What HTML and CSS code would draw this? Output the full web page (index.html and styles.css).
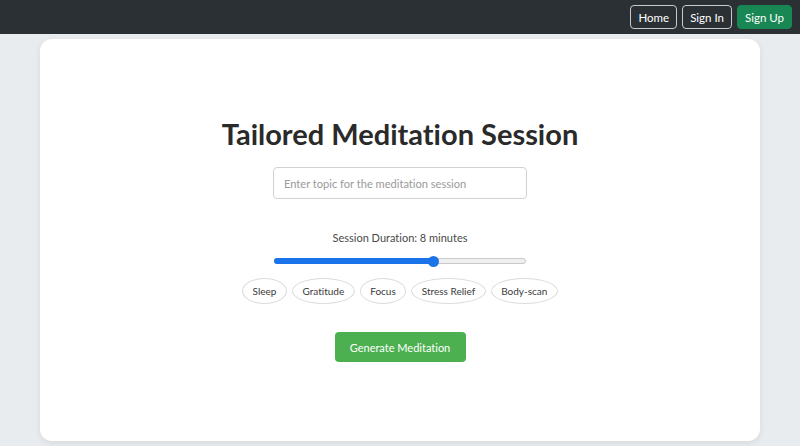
FILE: index.html
```html
<!DOCTYPE html>
<html>
<head>
<meta charset="utf-8">
<link rel="stylesheet" href="styles.css">
</head>
<body>
<nav class="navbar">
  <a class="nav-btn outline">Home</a>
  <a class="nav-btn outline">Sign In</a>
  <a class="nav-btn success">Sign Up</a>
</nav>
<main class="card">
  <h1 class="title">Tailored Meditation Session</h1>
  <input class="topic" type="text" placeholder="Enter topic for the meditation session">
  <div class="duration-label">Session Duration: 8 minutes</div>
  <div class="slider">
    <div class="slider-fill" style="width: 63.5%"></div>
    <div class="slider-thumb" style="left: 63.5%"></div>
  </div>
  <div class="chips">
    <span class="chip">Sleep</span>
    <span class="chip">Gratitude</span>
    <span class="chip">Focus</span>
    <span class="chip">Stress Relief</span>
    <span class="chip">Body-scan</span>
  </div>
  <button class="generate">Generate Meditation</button>
</main>
</body>
</html>
```
FILE: styles.css
```css
* { box-sizing: border-box; }
html, body { margin: 0; height: 100%; }
body {
  background: #e9ecef;
  font-family: Lato, "Noto Sans", sans-serif;
  font-variant-ligatures: none;
  display: flex;
  flex-direction: column;
  overflow: hidden;
}
.navbar {
  height: 34px;
  background: #2b3035;
  display: flex;
  justify-content: flex-end;
  align-items: center;
  gap: 5px;
  padding: 0 8px;
  flex-shrink: 0;
}
.nav-btn {
  height: 24px;
  padding: 0 7px;
  display: flex;
  align-items: center;
  border-radius: 4px;
  color: #fff;
  font-size: 11.5px;
}
.nav-btn.outline { border: 1px solid #c8cbce; }
.nav-btn.success { background: #198754; border: 1px solid #198754; }
.card {
  flex: 1;
  margin: 5px 40px 5px 40px;
  background: #fff;
  border-radius: 12px;
  box-shadow: 0 2px 6px rgba(0,0,0,0.08);
  display: flex;
  flex-direction: column;
  align-items: center;
  justify-content: center;
}
.title {
  margin: 0 0 17px;
  font-size: 29px;
  font-weight: 700;
  color: #2a2a2a;
  line-height: 32px;
}
.topic {
  width: 254px;
  height: 32px;
  border: 1px solid #d0d3d6;
  border-radius: 4px;
  padding: 0 10px;
  font-family: inherit;
  font-size: 11.1px;
  font-variant-ligatures: none;
  outline: none;
}
.topic::placeholder { color: #9a9a9a; }
.duration-label {
  margin-top: 31px;
  font-size: 11px;
  color: #4a4a4a;
  line-height: 16px;
}
.slider {
  position: relative;
  margin-top: 12px;
  width: 252px;
  height: 6px;
  border-radius: 3px;
  background: #efefef;
  border: 1px solid #c9c9c9;
}
.slider-fill {
  position: absolute;
  left: -1px; top: -1px; bottom: -1px;
  background: #1a73e8;
  border-radius: 3px;
}
.slider-thumb {
  position: absolute;
  top: 50%;
  width: 11px; height: 11px;
  margin: -5.5px 0 0 -5.5px;
  border-radius: 50%;
  background: #1a73e8;
}
.chips {
  margin-top: 14px;
  display: flex;
  gap: 5px;
}
.chip {
  height: 26px;
  padding: 0 9.5px;
  border: 1px solid #dcdcdc;
  border-radius: 50%;
  display: flex;
  align-items: center;
  font-size: 10px;
  color: #3a3a3a;
}
.generate {
  margin-top: 28px;
  width: 131px;
  height: 30px;
  background: #4caf50;
  color: #fff;
  border: none;
  border-radius: 4px;
  font-family: inherit;
  font-variant-ligatures: none;
  font-size: 11px;
}
```
